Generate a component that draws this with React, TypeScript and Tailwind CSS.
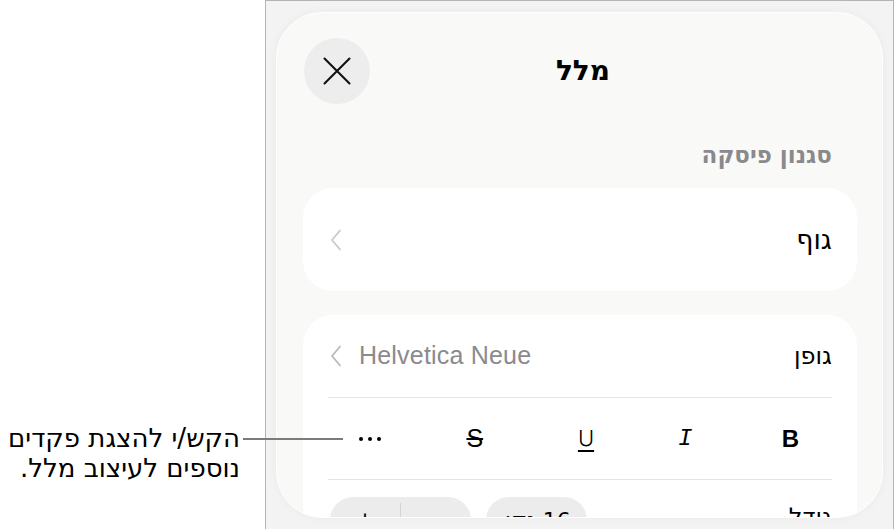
import React from 'react';

const hebrew = "font-['DejaVu_Sans','Liberation_Sans',sans-serif]";

function Chevron({ color = '#c4c4c8' }: { color?: string }) {
  return (
    <svg width="12" height="22" viewBox="0 0 12 22" fill="none">
      <path d="M10 1.5 L2 11 L10 20.5" stroke={color} strokeWidth="1.8" strokeLinecap="round" strokeLinejoin="round" />
    </svg>
  );
}

function CloseIcon() {
  return (
    <svg width="28" height="28" viewBox="0 0 28 28" fill="none">
      <path d="M1.5 1.5 L26.5 26.5 M26.5 1.5 L1.5 26.5" stroke="#111" strokeWidth="2.1" strokeLinecap="round" />
    </svg>
  );
}

function Divider() {
  return <div className="mx-[25px] h-px bg-[#e4e4e6]" />;
}

export default function App() {
  return (
    <div className={`relative flex h-[529px] w-[894px] overflow-hidden bg-white ${hebrew}`}>
      {/* callout on the left */}
      <div className="w-[265px] shrink-0" />
      <div
        dir="rtl"
        className="absolute left-0 top-[423px] w-[240px] text-right text-[26px] leading-[30px] text-black"
      >
        <p>הקש/י להצגת פקדים</p>
        <p>נוספים לעיצוב מלל.</p>
      </div>
      <div className="absolute left-[243px] top-[438px] z-10 h-[1.5px] w-[100px] bg-[#7b7b7b]" />

      {/* device frame */}
      <div className="flex-1 border-l border-r border-t border-[#b4b4b4] bg-[#f3f3f3] pl-[10px] pr-[10px] pt-[11px]">
        <div className="h-[506px] overflow-hidden rounded-[46px] border border-white bg-[#f9f9f8] pl-[26px] pr-[25px] pt-[25px] shadow-[0_0_10px_rgba(0,0,0,0.04)]">
          {/* header */}
          <div className="grid h-[66px] grid-cols-[66px_1fr_66px] items-center">
            <button className="ml-px flex h-[66px] w-[66px] items-center justify-center rounded-full bg-[#ededed]">
              <CloseIcon />
            </button>
            <h1 dir="rtl" className="pl-[6px] text-center text-[28px] font-bold leading-[34px] text-black">
              מלל
            </h1>
            <div />
          </div>

          {/* paragraph style */}
          <p dir="rtl" className="mt-[39px] h-[24px] pr-[25px] text-right text-[23px] font-semibold leading-[24px] text-[#8a8a8e]">
            סגנון פיסקה
          </p>
          <div className="mt-[21px] flex h-[103px] items-center justify-between rounded-[30px] bg-white pl-[27px] pr-[25px]">
            <Chevron color="#c9c9cd" />
            <span className="text-[27px] leading-[30px] text-black">גוף</span>
          </div>

          {/* font card */}
          <div className="mt-[24px] rounded-[30px] bg-white pb-[30px]">
            <div className="flex h-[82px] items-center justify-between pl-[27px] pr-[25px]">
              <div className="flex items-center gap-[17px]">
                <Chevron color="#b9b9bd" />
                <span className="font-['Liberation_Sans',sans-serif] text-[25px] tracking-[0.2px] text-[#8a8a8e]">
                  Helvetica Neue
                </span>
              </div>
              <span className="text-[24px] leading-[30px] text-black">גופן</span>
            </div>
            <Divider />
            <div className="grid h-[81px] grid-cols-5 items-center px-[14px] text-black">
              <div className="flex justify-center gap-[5px]">
                <span className="h-[4px] w-[4px] rounded-full bg-black" />
                <span className="h-[4px] w-[4px] rounded-full bg-black" />
                <span className="h-[4px] w-[4px] rounded-full bg-black" />
              </div>
              <div className="text-center font-['Liberation_Sans',sans-serif] text-[25px] line-through decoration-[1.5px]">
                S
              </div>
              <div className="pl-[12px] text-center font-['Inter',sans-serif] text-[22px] font-light underline decoration-[1.5px] underline-offset-[4px]">
                U
              </div>
              <div className="text-center font-['Liberation_Mono',monospace] text-[24px] italic">I</div>
              <div className="text-center font-['Liberation_Sans',sans-serif] text-[24px] font-bold">B</div>
            </div>
            <Divider />
            <div className="flex items-start justify-between pl-[27px] pr-[25px] pt-[17px]">
              <div className="flex gap-[15px]">
                <div className="flex h-[46px] w-[141px] items-center rounded-full bg-[#ececec]">
                  <span className="flex-1 text-center text-[22px] leading-none">+</span>
                  <span className="mt-[6px] h-[30px] w-px self-start bg-[#d4d4d4]" />
                  <span className="flex-1 text-center text-[22px] leading-none">−</span>
                </div>
                <div dir="rtl" className="flex h-[46px] w-[101px] items-center justify-center rounded-full bg-[#ececec] text-[22px]">
                  16 נק׳
                </div>
              </div>
              <span className="mt-[5px] text-[24px] leading-[30px] text-black">גודל</span>
            </div>
          </div>
        </div>
      </div>
    </div>
  );
}
